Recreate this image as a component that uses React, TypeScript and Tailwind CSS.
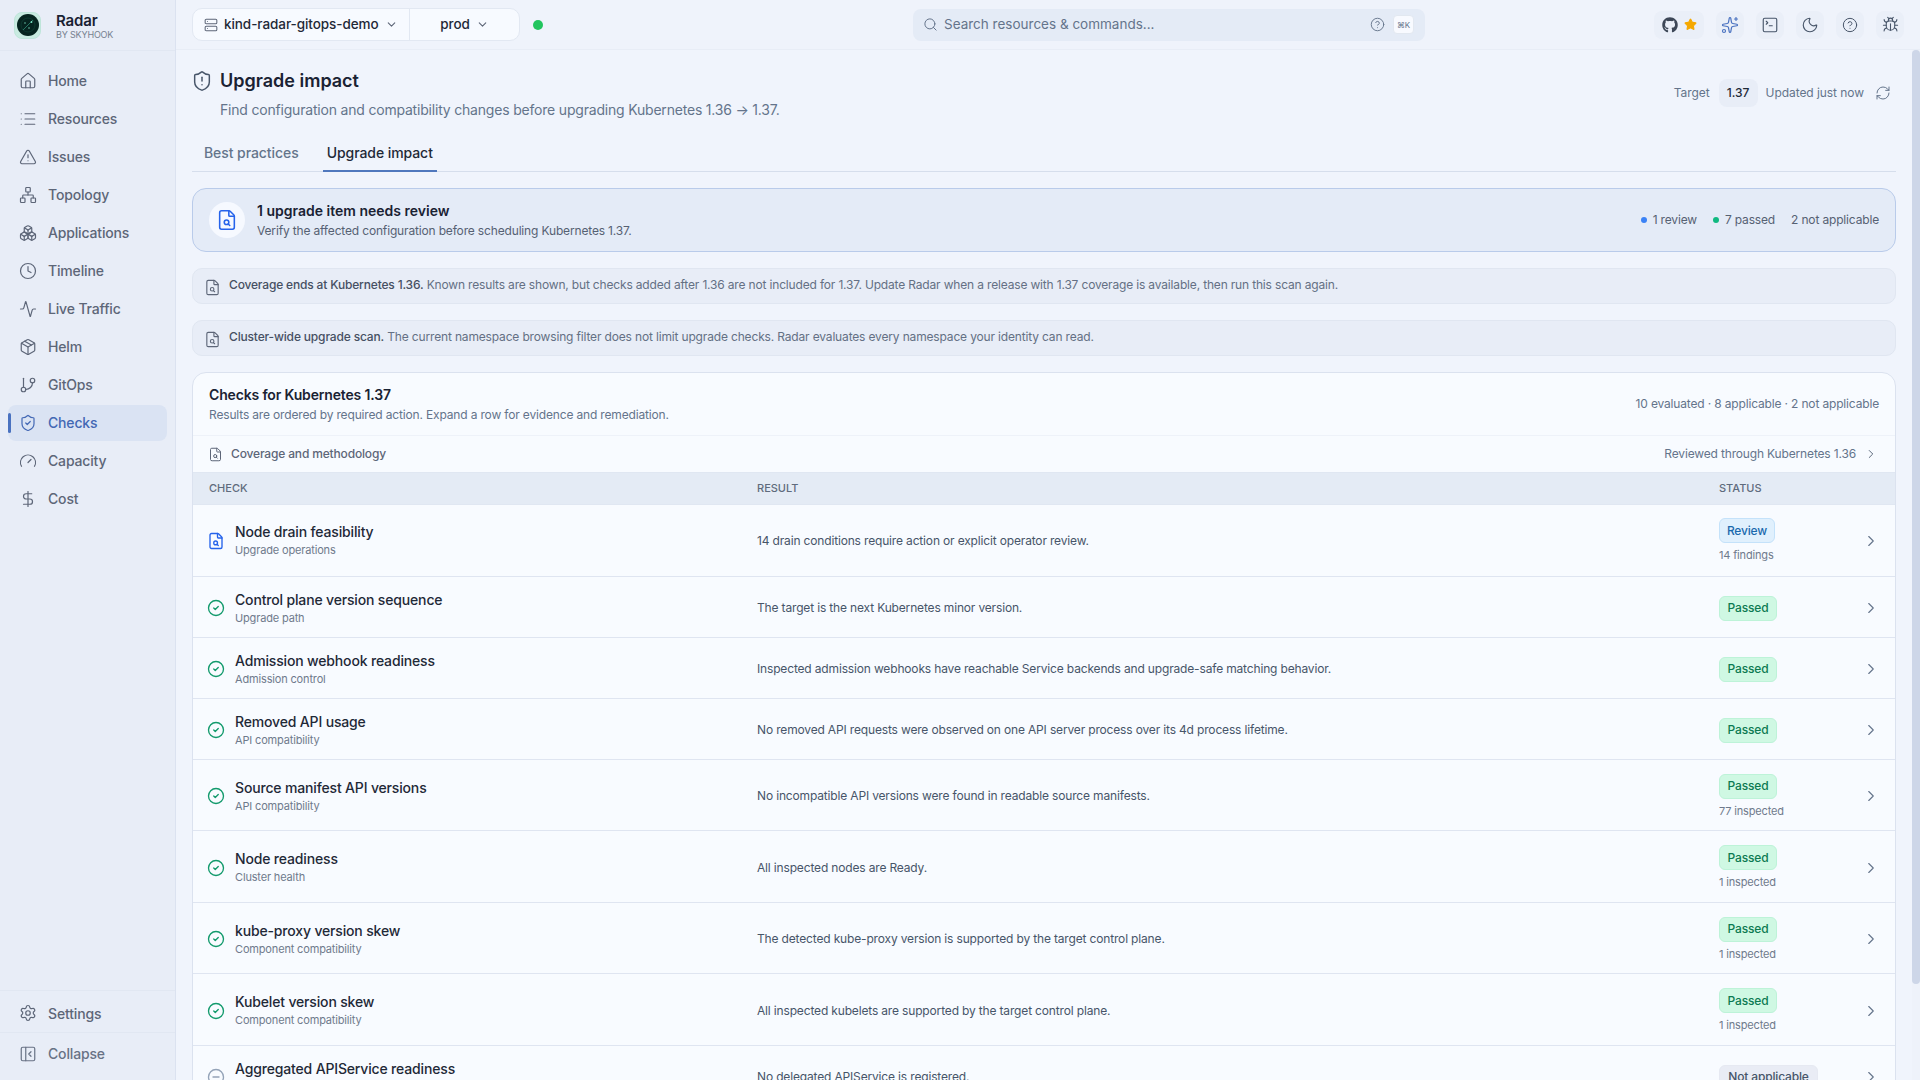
import React from "react";
import {
  Home, List, TriangleAlert, Network, Boxes, Clock, Activity, Package, GitBranch, ShieldCheck, Gauge, DollarSign,
  Settings, PanelLeftClose, ShieldAlert, CircleCheck, CircleMinus, ChevronRight, ChevronDown, Server,
  Search, CircleHelp, Star, Sparkles, SquareTerminal, Moon, Bug, RefreshCw,
} from "lucide-react";
import { FaGithub } from "react-icons/fa";

function FileSearchIcon({ size = 16, strokeWidth = 1.75, className = "" }: { size?: number; strokeWidth?: number; className?: string }) {
  return (
    <svg width={size} height={size} viewBox="0 0 24 24" fill="none" stroke="currentColor" strokeWidth={strokeWidth} strokeLinecap="round" strokeLinejoin="round" className={className}>
      <path d="M6 22a2 2 0 0 1-2-2V4a2 2 0 0 1 2-2h8a2.4 2.4 0 0 1 1.704.706l3.588 3.588A2.4 2.4 0 0 1 20 8v12a2 2 0 0 1-2 2z" />
      <path d="M14 2v5a1 1 0 0 0 1 1h5" />
      <circle cx="11.5" cy="14.5" r="2.5" />
      <path d="M13.3 16.3 15 18" />
    </svg>
  );
}

const nav = [
  { label: "Home", Icon: Home },
  { label: "Resources", Icon: List },
  { label: "Issues", Icon: TriangleAlert },
  { label: "Topology", Icon: Network },
  { label: "Applications", Icon: Boxes },
  { label: "Timeline", Icon: Clock },
  { label: "Live Traffic", Icon: Activity },
  { label: "Helm", Icon: Package },
  { label: "GitOps", Icon: GitBranch },
  { label: "Checks", Icon: ShieldCheck, active: true },
  { label: "Capacity", Icon: Gauge },
  { label: "Cost", Icon: DollarSign },
];

type Row = { title: string; sub: string; result: string; status: "Review" | "Passed" | "Not applicable"; note?: string };
const rows: Row[] = [
  { title: "Node drain feasibility", sub: "Upgrade operations", result: "14 drain conditions require action or explicit operator review.", status: "Review", note: "14 findings" },
  { title: "Control plane version sequence", sub: "Upgrade path", result: "The target is the next Kubernetes minor version.", status: "Passed" },
  { title: "Admission webhook readiness", sub: "Admission control", result: "Inspected admission webhooks have reachable Service backends and upgrade-safe matching behavior.", status: "Passed" },
  { title: "Removed API usage", sub: "API compatibility", result: "No removed API requests were observed on one API server process over its 4d process lifetime.", status: "Passed" },
  { title: "Source manifest API versions", sub: "API compatibility", result: "No incompatible API versions were found in readable source manifests.", status: "Passed", note: "77 inspected" },
  { title: "Node readiness", sub: "Cluster health", result: "All inspected nodes are Ready.", status: "Passed", note: "1 inspected" },
  { title: "kube-proxy version skew", sub: "Component compatibility", result: "The detected kube-proxy version is supported by the target control plane.", status: "Passed", note: "1 inspected" },
  { title: "Kubelet version skew", sub: "Component compatibility", result: "All inspected kubelets are supported by the target control plane.", status: "Passed", note: "1 inspected" },
  { title: "Aggregated APIService readiness", sub: "API extensions", result: "No delegated APIService is registered.", status: "Not applicable" },
];

function StatusBadge({ status }: { status: Row["status"] }) {
  if (status === "Review")
    return <span className="inline-flex h-[25px] w-[56px] items-center justify-center rounded-md border border-[#c4e2fa] bg-[#e0f0fd] text-[12px] font-medium text-[#1a69ad]">Review</span>;
  if (status === "Passed")
    return <span className="inline-flex h-[25px] w-[58px] items-center justify-center rounded-md border border-[#bdf3d8] bg-[#cff8e3] text-[12px] font-medium text-[#0d7a52]">Passed</span>;
  return <span className="inline-flex h-[25px] w-[99px] items-center justify-center rounded-md border border-[#e6e9f2] bg-[#e9ecf5] text-[12px] font-medium text-[#475569]">Not applicable</span>;
}

function TopIcon({ children, wide }: { children: React.ReactNode; wide?: boolean }) {
  return (
    <div className={`flex h-7 items-center justify-center gap-[6px] rounded-lg bg-[#eaeff8] text-[#475569] ${wide ? "w-[50px]" : "w-7"}`}>
      {children}
    </div>
  );
}

function Logo() {
  return (
    <div className="flex h-[27px] w-[27px] items-center justify-center rounded-lg border border-[#bfe5da] bg-[#c9ebe1]">
      <svg width="22" height="22" viewBox="0 0 22 22">
        <circle cx="11" cy="11" r="11" fill="#06241f" />
        <circle cx="11" cy="11" r="7" fill="none" stroke="#0f3d34" strokeWidth="0.8" />
        <path d="M6 16 L16 6" stroke="#2f8a74" strokeWidth="0.8" />
        <circle cx="14.5" cy="8" r="0.9" fill="#7fe3c4" />
        <circle cx="8" cy="9" r="0.7" fill="#7fe3c4" />
        <circle cx="12" cy="14" r="0.7" fill="#7fe3c4" />
      </svg>
    </div>
  );
}

export default function App() {
  return (
    <div className="flex h-screen w-full overflow-hidden bg-[#f0f4fc] font-['Inter',sans-serif] tracking-[-0.01em] text-[#1a2233]">
      {/* Sidebar */}
      <aside className="flex h-full w-[176px] shrink-0 flex-col border-r border-[#dbe2f0] bg-[#e8edf7]">
        <div className="flex h-[51px] shrink-0 items-center gap-[15px] border-b border-[#e1e7f2] pl-[14px]">
          <Logo />
          <div className="flex flex-col pt-[1px]">
            <span className="text-[15px] leading-[17px] font-semibold text-[#1a2233]">Radar</span>
            <span className="text-[9px] leading-[11px] tracking-[-0.02em] text-[#76818f]">BY SKYHOOK</span>
          </div>
        </div>
        <nav className="flex flex-1 flex-col gap-[2px] px-2 pt-3">
          {nav.map(({ label, Icon, active }) => (
            <div
              key={label}
              className={`relative flex h-9 items-center gap-[11px] rounded-lg pb-[1px] pl-[11px] text-[14px] font-medium ${active ? "bg-[#dae3f3] text-[#4368b4]" : "text-[#5d6678]"}`}
            >
              {active && <span className="absolute top-[8px] left-0 h-5 w-[3px] rounded-full bg-[#4a72c0]" />}
              <Icon size={18} strokeWidth={1.6} />
              {label}
            </div>
          ))}
        </nav>
        <div className="flex h-[42px] shrink-0 items-center gap-[11px] border-t border-[#e1e7f2] pt-[3px] pl-[19px] text-[14px] font-medium text-[#5d6678]">
          <Settings size={18} strokeWidth={1.6} />
          Settings
        </div>
        <div className="flex h-[48px] shrink-0 items-center gap-[11px] border-t border-[#e1e7f2] pb-[6px] pl-[19px] text-[14px] font-medium text-[#687285]">
          <PanelLeftClose size={18} strokeWidth={1.6} />
          Collapse
        </div>
      </aside>

      <div className="flex min-w-0 flex-1 flex-col">
        {/* Top bar */}
        <header className="flex h-[50px] shrink-0 items-center border-b border-[#e8edf6] bg-[#eff3fb] pr-4 pl-4">
          <div className="flex h-[33px] w-[328px] items-center rounded-[10px] border border-[#e2e8f2] bg-[#f7faff] text-[13.5px] font-medium tracking-[-0.005em] text-[#1f2937]">
            <div className="flex h-full w-[217px] items-center gap-[6px] border-r border-[#e2e8f2] pl-[11px]">
              <Server size={14} strokeWidth={1.8} className="text-[#5d6678]" />
              <span>kind-radar-gitops-demo</span>
              <ChevronDown size={13} className="text-[#5d6678]" />
            </div>
            <div className="flex flex-1 items-center justify-center gap-[6px]">
              <span>prod</span>
              <ChevronDown size={13} className="text-[#5d6678]" />
            </div>
          </div>
          <span className="ml-[13px] h-[10px] w-[10px] rounded-full bg-[#22c55e]" />
          <div className="ml-[370px] flex h-8 w-[512px] items-center rounded-lg bg-[#e4ebf6] pr-[11px] pl-[10px] text-[#64748b]">
            <Search size={15} strokeWidth={1.6} />
            <span className="ml-[6px] flex-1 text-[13.5px] tracking-normal">Search resources &amp; commands...</span>
            <CircleHelp size={15} strokeWidth={1.5} />
            <span className="ml-[8px] flex h-[19px] w-[21px] items-center justify-center rounded border border-[#e2e8f0] bg-[#f8faff] text-[8px]">⌘K</span>
          </div>
          <div className="ml-auto flex items-center gap-3">
            <TopIcon wide>
              <FaGithub size={16} className="text-[#3d4757]" />
              <Star size={13} fill="#f5a800" stroke="#f5a800" />
            </TopIcon>
            <TopIcon><Sparkles size={18} strokeWidth={1.6} className="text-[#4a72c0]" /></TopIcon>
            <TopIcon><SquareTerminal size={18} strokeWidth={1.5} /></TopIcon>
            <TopIcon><Moon size={18} strokeWidth={1.5} /></TopIcon>
            <TopIcon><CircleHelp size={16} strokeWidth={1.5} /></TopIcon>
            <TopIcon><Bug size={17} strokeWidth={1.5} /></TopIcon>
          </div>
        </header>

        <div className="flex min-h-0 flex-1">
          <main className="min-w-0 flex-1 overflow-hidden px-4">
            {/* Title */}
            <div className="flex h-[72px] items-start justify-between pt-[18px]">
              <div>
                <div className="-ml-[1px] flex items-center gap-[7px]">
                  <ShieldAlert size={22} strokeWidth={1.6} className="text-[#475569]" />
                  <h1 className="text-[18px] leading-[26px] font-semibold tracking-normal text-[#1a2233]">Upgrade impact</h1>
                </div>
                <p className="mt-[6px] ml-[28px] text-[14px] leading-[20px] tracking-[-0.014em] text-[#64748b]">
                  Find configuration and compatibility changes before upgrading Kubernetes 1.36 → 1.37.
                </p>
              </div>
              <div className="mt-[11px] flex items-center pr-[5px] text-[12px] tracking-[-0.005em] text-[#64748b]">
                <span>Target</span>
                <span className="mr-2 ml-[9px] flex h-7 w-[39px] items-center justify-center rounded-lg bg-[#e8edf7] font-medium text-[#1f2937]">1.37</span>
                <span>Updated just now</span>
                <RefreshCw size={16} strokeWidth={1.5} className="ml-[11px]" />
              </div>
            </div>
            {/* Tabs */}
            <div className="flex h-[50px] items-end gap-5 border-b border-[#d6deec] pl-2 text-[14px]">
              <div className="flex h-[38px] items-center px-1 pt-[1px] font-medium tracking-[-0.005em] text-[#64748b]">Best practices</div>
              <div className="-mb-px flex h-[38px] items-center border-b-[2px] border-[#5078bd] px-1 pt-[1px] font-medium tracking-[-0.005em] text-[#1f2937]">Upgrade impact</div>
            </div>

            {/* Banner */}
            <div className="mt-[16px] flex h-[64px] items-center rounded-[14px] border border-[#b9cbea] bg-[#e4ebf7] pr-4 pl-4">
              <div className="flex h-9 w-9 items-center justify-center rounded-full bg-[#f6f9ff]">
                <FileSearchIcon size={22} strokeWidth={1.7} className="text-[#2563eb]" />
              </div>
              <div className="ml-3 flex-1">
                <div className="text-[14px] leading-[18px] font-semibold tracking-normal text-[#1a2233]">1 upgrade item needs review</div>
                <div className="mt-[3px] text-[12px] leading-[16px] text-[#566173]">Verify the affected configuration before scheduling Kubernetes 1.37.</div>
              </div>
              <div className="flex items-center text-[12px] text-[#566173]">
                <span className="h-[6px] w-[6px] rounded-full bg-[#3b82f6]" />
                <span className="ml-[6px]">1 review</span>
                <span className="ml-4 h-[6px] w-[6px] rounded-full bg-[#10b981]" />
                <span className="ml-[6px]">7 passed</span>
                <span className="ml-4">2 not applicable</span>
              </div>
            </div>

            {/* Notes */}
            <div className="mt-4 flex h-9 items-center gap-2 rounded-[10px] border border-[#e0e6f1] bg-[#e8edf7] pl-[11px] text-[12px] tracking-[-0.014em] text-[#647084]">
              <FileSearchIcon size={17} strokeWidth={1.6} className="mt-[2px] text-[#5d6678]" />
              <span className="-mt-[2px]"><span className="font-medium text-[#465063]">Coverage ends at Kubernetes 1.36.</span> Known results are shown, but checks added after 1.36 are not included for 1.37. Update Radar when a release with 1.37 coverage is available, then run this scan again.</span>
            </div>
            <div className="mt-4 flex h-9 items-center gap-2 rounded-[10px] border border-[#e0e6f1] bg-[#e8edf7] pl-[11px] text-[12px] text-[#647084]">
              <FileSearchIcon size={17} strokeWidth={1.6} className="mt-[2px] text-[#5d6678]" />
              <span className="-mt-[2px]"><span className="font-medium text-[#465063]">Cluster-wide upgrade scan.</span> The current namespace browsing filter does not limit upgrade checks. Radar evaluates every namespace your identity can read.</span>
            </div>

            {/* Card */}
            <section className="mt-4 overflow-hidden rounded-t-[14px] border border-[#dbe2ef] bg-[#f8fbff]">
              <div className="flex h-[62px] items-center justify-between px-4">
                <div>
                  <div className="text-[14px] leading-[18px] font-semibold text-[#1a2233]">Checks for Kubernetes 1.37</div>
                  <div className="mt-[3px] text-[12px] leading-[16px] text-[#64748b]">Results are ordered by required action. Expand a row for evidence and remediation.</div>
                </div>
                <div className="text-[12px] text-[#64748b]">10 evaluated · 8 applicable · 2 not applicable</div>
              </div>
              <div className="flex h-[37px] items-center justify-between border-t border-[#eef2f9] pr-[17px] pl-[15px] text-[12px] text-[#5d6678]">
                <div className="flex items-center gap-[8px]">
                  <FileSearchIcon size={15} strokeWidth={1.6} />
                  <span className="font-medium">Coverage and methodology</span>
                </div>
                <div className="flex items-center gap-[8px] text-[#64748b]">
                  Reviewed through Kubernetes 1.36
                  <ChevronRight size={14} strokeWidth={1.5} className="text-[#475569]" />
                </div>
              </div>
              <div className="flex h-[33px] items-center border-y border-[#e0e7f2] bg-[#e4ebf5] pl-4 text-[11px] font-medium tracking-normal text-[#5f6b7d]">
                <span className="w-[548px]">CHECK</span>
                <span className="w-[962px]">RESULT</span>
                <span>STATUS</span>
              </div>
              {rows.map((r, i) => {
                const tone = r.status === "Review" ? "text-[#2563eb]" : r.status === "Passed" ? "text-[#129a6c]" : "text-[#94a3b8]";
                return (
                  <div key={r.title} className={`flex items-center border-b border-[#dfe5f1] pl-4 ${i === 0 ? "pt-[1px]" : "pt-[3px]"} ${r.note ? "h-[71.5px]" : "h-[61px]"}`}>
                    <div className="-ml-[2px] flex w-[550px] items-center gap-[10px]">
                      {r.status === "Review" ? (
                        <FileSearchIcon size={18} strokeWidth={1.8} className={`shrink-0 ${tone}`} />
                      ) : r.status === "Passed" ? (
                        <CircleCheck size={18} strokeWidth={1.8} className={`shrink-0 ${tone}`} />
                      ) : (
                        <CircleMinus size={18} strokeWidth={1.8} className={`shrink-0 ${tone}`} />
                      )}
                      <div>
                        <div className="text-[14px] leading-[18px] font-medium text-[#1f2937]">{r.title}</div>
                        <div className="mt-[1px] text-[11px] leading-[16px] text-[#6f7a8c]">{r.sub}</div>
                      </div>
                    </div>
                    <div className="w-[962px] text-[12px] text-[#475569]">{r.result}</div>
                    <div className="flex w-[143px] flex-col items-start">
                      <StatusBadge status={r.status} />
                      {r.note && <div className="mt-[4px] text-[11px] leading-[16px] text-[#6f7a8c]">{r.note}</div>}
                    </div>
                    <ChevronRight size={18} strokeWidth={1.5} className="text-[#64748b]" />
                  </div>
                );
              })}
            </section>
          </main>
          {/* Scrollbar */}
          <div className="w-2 shrink-0 bg-[#eef2fa]">
            <div className="h-[934px] w-2 rounded-full bg-[#cdd6e8]" />
          </div>
        </div>
      </div>
    </div>
  );
}
